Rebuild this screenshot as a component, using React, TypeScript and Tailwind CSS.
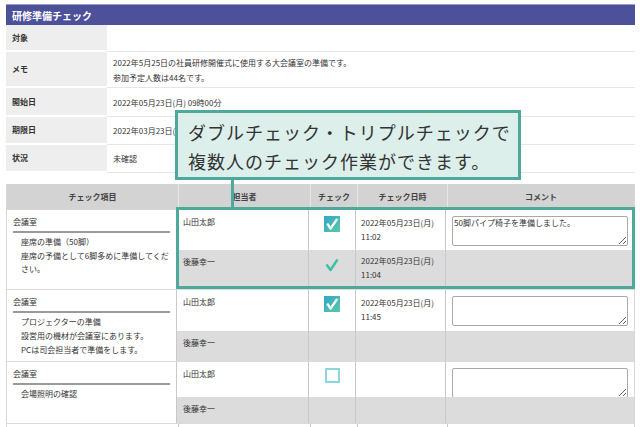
import React from "react";

const font = { fontFamily: '"Noto Sans CJK JP", "Noto Sans", sans-serif' };

function CheckedBox() {
  return (
    <svg width="16" height="16" viewBox="0 0 16 16">
      <defs>
        <linearGradient id="cb" x1="0" y1="0" x2="1" y2="1">
          <stop offset="0" stopColor="#2fa6c8" />
          <stop offset="1" stopColor="#5cc9a6" />
        </linearGradient>
      </defs>
      <rect x="0" y="0" width="16" height="16" fill="url(#cb)" />
      <path d="M3.2 7.6 L6.6 12.6 L13.2 2.8" stroke="#fff" strokeWidth="2.4" fill="none" strokeLinejoin="round" />
    </svg>
  );
}

function CheckMark() {
  return (
    <svg width="14" height="14" viewBox="0 0 14 14">
      <path d="M1.5 6.5 L5.5 12 L12.5 1.5" stroke="#3fbfa8" strokeWidth="2.4" fill="none" strokeLinejoin="round" />
    </svg>
  );
}

function EmptyBox() {
  return <div className="w-[15px] h-[15px] border-2 border-[#8dd6de] bg-white" />;
}

type Sub = {
  person: string;
  h: string;
  mark?: "box" | "check" | "empty";
  date?: string;
  time?: string;
  comment?: string | null;
  gray?: boolean;
};

function SubRow({ s }: { s: Sub }) {
  return (
    <div className={`flex ${s.h} ${s.gray ? "bg-[#dcdcdc]" : "bg-white"}`}>
      <div className="w-[132px] border-r border-[#c9c9c9] px-[6px] pt-[6px]">{s.person}</div>
      <div className={`w-[47px] border-r border-[#c9c9c9] flex justify-center ${s.gray ? "pt-[8px]" : "pt-[6px]"}`}>
        {s.mark === "box" && <CheckedBox />}
        {s.mark === "check" && <CheckMark />}
        {s.mark === "empty" && <EmptyBox />}
      </div>
      <div className={`w-[90px] border-r border-[#c9c9c9] pl-[5px] leading-[14px] ${s.gray ? "pt-[4px]" : "pt-[6px]"}`}>
        {s.date && <div>{s.date}</div>}
        {s.time && <div>{s.time}</div>}
      </div>
      <div className="flex-1 pl-[6px] pr-[6px] pt-[6px]">
        {s.comment !== undefined && s.comment !== null && (
          <textarea
            readOnly
            defaultValue={s.comment}
            className="w-[176px] h-[30px] border border-[#a9a9a9] rounded-[2px] bg-white px-[1px] text-[8px] leading-[11px] text-[#333] outline-none"
            style={font}
          />
        )}
      </div>
    </div>
  );
}

type Group = { place: string; items: string[]; subs: Sub[] };

const groups: Group[] = [
  {
    place: "会議室",
    items: ["座席の準備（50脚）", "座席の予備として6脚多めに準備してください。"],
    subs: [
      { person: "山田太郎", h: "h-[40px]", mark: "box", date: "2022年05月23日(月)", time: "11:02", comment: "50脚パイプ椅子を準備しました。" },
      { person: "後藤幸一", h: "h-[39px]", mark: "check", date: "2022年05月23日(月)", time: "11:04", gray: true },
    ],
  },
  {
    place: "会議室",
    items: ["プロジェクターの準備", "設営用の機材が会議室にあります。", "PCは司会担当者で準備をします。"],
    subs: [
      { person: "山田太郎", h: "h-[41px]", mark: "box", date: "2022年05月23日(月)", time: "11:45", comment: "" },
      { person: "後藤幸一", h: "h-[30px]", gray: true },
    ],
  },
  {
    place: "会議室",
    items: ["会場照明の確認"],
    subs: [
      { person: "山田太郎", h: "h-[35px]", mark: "empty", comment: "" },
      { person: "後藤幸一", h: "h-[26px]", gray: true },
    ],
  },
];

const info = [
  { label: "対象", h: "h-[27px]", lines: [] as string[] },
  { label: "メモ", h: "h-[36px]", lines: ["2022年5月25日の社員研修開催式に使用する大会議室の準備です。", "参加予定人数は44名です。"] },
  { label: "開始日", h: "h-[29px]", lines: ["2022年05月23日(月) 09時00分"] },
  { label: "期限日", h: "h-[28px]", lines: ["2022年03月23日(水) 17時00分"] },
  { label: "状況", h: "h-[28px]", lines: ["未確認"] },
];

export default function App() {
  return (
    <div className="relative w-[640px] h-[427px] overflow-hidden bg-white text-[8px] text-[#333]" style={font}>
      <div className="pt-[4px] pl-[6px] pr-[5px]">
        {/* header */}
        <div className="h-[21px] bg-[#4d5199] border-t border-[#9a9cd0] flex items-center pl-[6px] text-white font-bold text-[10px]">
          研修準備チェック
        </div>

        {/* info */}
        {info.map((r) => (
          <div key={r.label} className={`flex ${r.h}`}>
            <div className="w-[101px] bg-[#eeeeee] border-b-2 border-white flex items-center pl-[6px] font-bold">{r.label}</div>
            <div className="flex-1 border-b border-[#e6e6e6] flex flex-col justify-center pl-[6px] leading-[15px]">
              {r.lines.map((l) => (
                <div key={l}>{l}</div>
              ))}
            </div>
          </div>
        ))}

        {/* check table */}
        <div className="mt-[11px] border-l border-r border-[#d8d8d8]">
          <div className="flex h-[26px] bg-[#d3d3d3] font-bold text-[#444]">
            <div className="w-[172px] border-r border-[#e6e6e6] flex items-center justify-center">チェック項目</div>
            <div className="w-[132px] border-r border-[#e6e6e6] flex items-center justify-center">担当者</div>
            <div className="w-[47px] border-r border-[#e6e6e6] flex items-center justify-center">チェック</div>
            <div className="w-[90px] border-r border-[#e6e6e6] flex items-center justify-center">チェック日時</div>
            <div className="flex-1 flex items-center justify-center">コメント</div>
          </div>
          {groups.map((g, i) => (
            <div key={i} className="flex border-b border-[#dadada]">
              <div className="w-[172px] border-r border-[#c9c9c9] px-[6px] pt-[6px]">
                <div className="leading-[12px] pb-[3px] border-b-2 border-[#9a9a9a]">{g.place}</div>
                <div className="pl-[8px] pt-[2px] leading-[13px]">
                  {g.items.map((t) => (
                    <div key={t} className="mb-[1px]">{t}</div>
                  ))}
                </div>
              </div>
              <div className="flex-1 flex flex-col">
                {g.subs.map((s, j) => (
                  <SubRow key={j} s={s} />
                ))}
              </div>
            </div>
          ))}
          <div className="flex h-[10px]">
            <div className="w-[172px] border-r border-[#c9c9c9]" />
            <div className="w-[132px] border-r border-[#c9c9c9]" />
            <div className="w-[47px] border-r border-[#c9c9c9]" />
            <div className="w-[90px] border-r border-[#c9c9c9]" />
          </div>
        </div>
      </div>

      {/* highlight around double-check rows */}
      <div className="absolute left-[176px] top-[207px] w-[459px] h-[82px] border-[3px] border-[#4ea99a]" />
      {/* connector */}
      <div className="absolute left-[231px] top-[178px] w-[3px] h-[30px] bg-[#4ea99a]" />
      {/* callout */}
      <div className="absolute left-[175px] top-[110px] w-[346px] h-[70px] border-[3px] border-[#4ea99a] bg-[#dcefeb] pl-[10px] pt-[5px] text-[18px] leading-[29px] tracking-[1px] text-[#333]">
        <div>ダブルチェック・トリプルチェックで</div>
        <div>複数人のチェック作業ができます。</div>
      </div>
    </div>
  );
}
